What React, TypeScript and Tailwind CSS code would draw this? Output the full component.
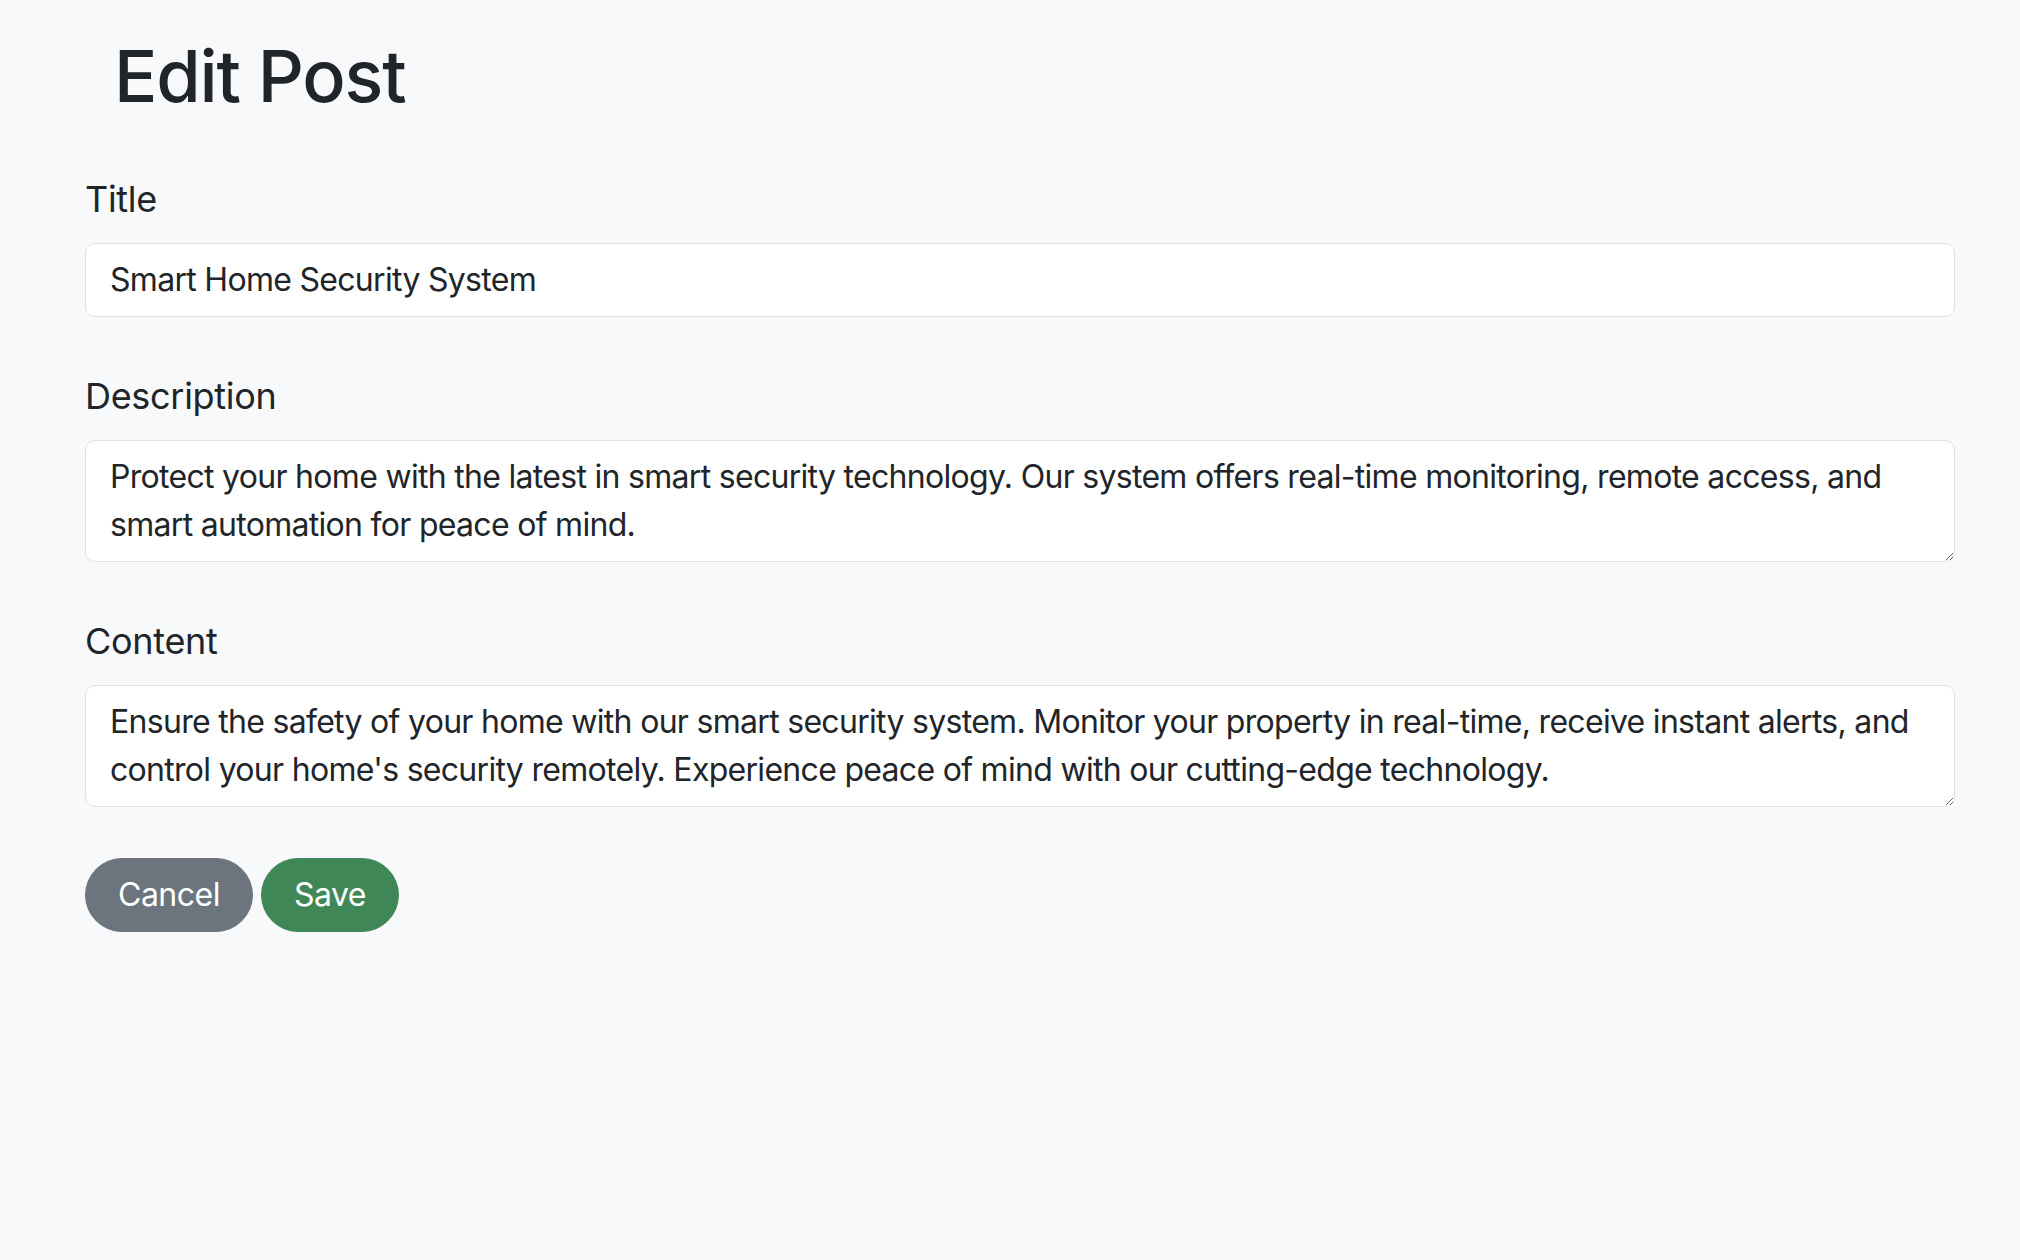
import { useState } from "react";

const fieldClass =
  "block w-full rounded-[10px] border border-[#dee2e6] bg-white px-6 py-3 text-[32px] leading-[48px] tracking-[-0.7px] text-[#212529] outline-none";

export default function App() {
  const [title, setTitle] = useState("Smart Home Security System");
  const [description, setDescription] = useState(
    "Protect your home with the latest in smart security technology. Our system offers real-time monitoring, remote access, and smart automation for peace of mind."
  );
  const [content, setContent] = useState(
    "Ensure the safety of your home with our smart security system. Monitor your property in real-time, receive instant alerts, and control your home's security remotely. Experience peace of mind with our cutting-edge technology."
  );

  return (
    <div className="min-h-screen bg-[#f8f9fa] pl-[85px] pr-[65px] pt-[33px] font-['Inter',sans-serif] text-[#212529]">
      <h1 className="pl-[29px] text-[72px] font-medium leading-[1.2] tracking-[-1.2px]">
        Edit Post
      </h1>

      <form className="mt-[53px]" onSubmit={(e) => e.preventDefault()}>
        <div className="mb-[52px]">
          <label className="mb-[17px] block text-[36px] leading-[54px] tracking-[-0.3px]">Title</label>
          <input
            type="text"
            value={title}
            onChange={(e) => setTitle(e.target.value)}
            className={fieldClass}
          />
        </div>

        <div className="mb-[52px]">
          <label className="mb-[17px] block text-[36px] leading-[54px] tracking-[-0.3px]">Description</label>
          <textarea
            rows={2}
            value={description}
            onChange={(e) => setDescription(e.target.value)}
            className={`${fieldClass} h-[122px]`}
          />
        </div>

        <div className="mb-[51px]">
          <label className="mb-[17px] block text-[36px] leading-[54px] tracking-[-0.3px]">Content</label>
          <textarea
            rows={2}
            value={content}
            onChange={(e) => setContent(e.target.value)}
            className={`${fieldClass} h-[122px]`}
          />
        </div>

        <div className="flex gap-2">
          <button
            type="button"
            className="rounded-full border border-[#6c757d] bg-[#6c757d] px-[32px] py-[12px] text-[32px] leading-[48px] tracking-[-0.5px] text-white"
          >
            Cancel
          </button>
          <button
            type="submit"
            className="rounded-full border border-[#408758] bg-[#408758] px-[32px] py-[12px] text-[32px] leading-[48px] tracking-[-0.5px] text-white"
          >
            Save
          </button>
        </div>
      </form>
    </div>
  );
}
